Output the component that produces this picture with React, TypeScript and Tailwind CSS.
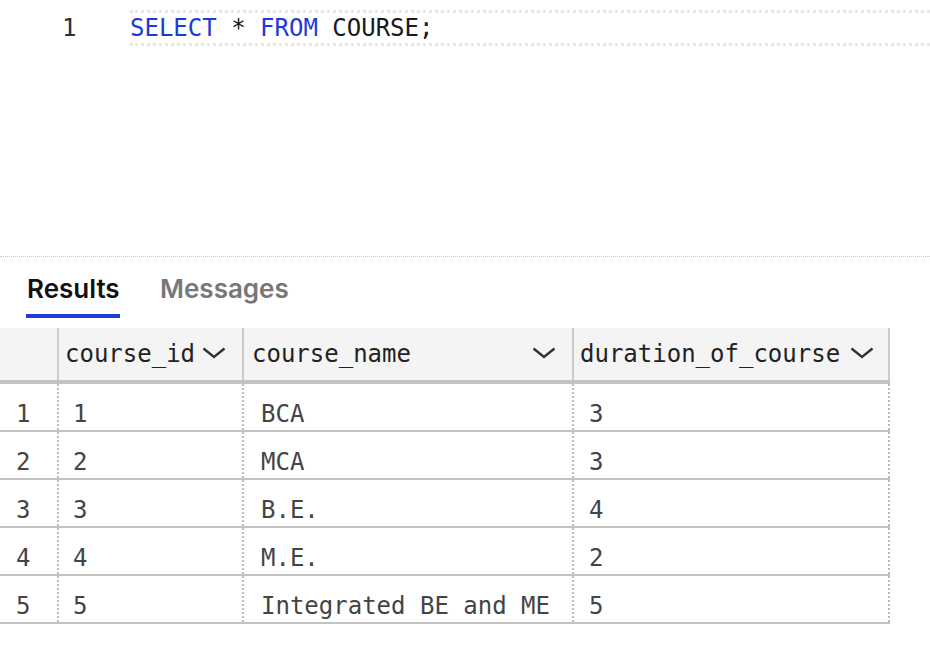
import React from "react";

const mono = { fontFamily: '"DejaVu Sans Mono", "Liberation Mono", monospace' };

function Chevron() {
  return (
    <svg width="24" height="12" viewBox="0 0 24 12" className="shrink-0 -mt-[2px]">
      <polyline points="1.5,1.5 12,10 22.5,1.5" fill="none" stroke="#333" strokeWidth="2.4" />
    </svg>
  );
}

const rows = [
  ["1", "1", "BCA", "3"],
  ["2", "2", "MCA", "3"],
  ["3", "3", "B.E.", "4"],
  ["4", "4", "M.E.", "2"],
  ["5", "5", "Integrated BE and ME", "5"],
];

export default function App() {
  return (
    <div className="w-[930px] h-[650px] bg-white overflow-hidden" style={mono}>
      {/* Editor */}
      <div className="h-[256px] pt-[10px]">
        <div className="flex">
          <div className="w-[130px] pl-[62px] pt-[3px] text-[24px] leading-[30px] text-[#2e2e3a]">1</div>
          <div className="flex-1 h-[36px] border-y-[3px] border-dotted border-[#e8e8e8] text-[24px] leading-[30px] text-[#1a1a1a] whitespace-pre">
            <span className="text-[#1d3bd6]">SELECT</span> * <span className="text-[#1d3bd6]">FROM</span> COURSE;
          </div>
        </div>
      </div>

      {/* Separator */}
      <div className="border-t border-dotted border-[#c8c8c8]" />

      {/* Tabs */}
      <div
        className="flex items-start pl-[26px] pt-[16px] h-[71px]"
        style={{ fontFamily: 'Inter, "Noto Sans", sans-serif' }}
      >
        <div className="flex flex-col w-[94px]">
          <span className="text-[26px] leading-[32px] font-semibold text-[#111] pl-[1px]">Results</span>
          <div className="mt-[9px] h-[4px] bg-[#1c3ed6]" />
        </div>
        <span className="ml-[40px] text-[26px] leading-[32px] font-semibold text-[#777]">Messages</span>
      </div>

      {/* Table */}
      <div className="w-[890px]">
        <div className="flex h-[56px] bg-[#f4f4f4] border-b-[4px] border-[#c2c2c2] text-[24px] leading-[28px] text-[#222]">
          <div className="w-[59px] border-r-2 border-[#cbcbcb]" />
          <div className="w-[185px] border-r-2 border-[#cbcbcb] flex items-center justify-between pl-[6px] pr-[16px]">
            <span>course_id</span>
            <Chevron />
          </div>
          <div className="w-[330px] border-r-2 border-[#cbcbcb] flex items-center justify-between pl-[8px] pr-[16px]">
            <span>course_name</span>
            <Chevron />
          </div>
          <div className="w-[316px] border-r-2 border-[#cbcbcb] flex items-center justify-between pl-[6px] pr-[14px]">
            <span>duration_of_course</span>
            <Chevron />
          </div>
        </div>
        {rows.map((r) => (
          <div
            key={r[0]}
            className="flex h-[48px] border-b-2 border-[#c2c2c2] text-[24px] leading-[28px] text-[#444]"
          >
            <div className="w-[59px] border-r-2 border-dotted border-[#bdbdbd] pl-[16px] pt-[16px]">{r[0]}</div>
            <div className="w-[185px] border-r-2 border-dotted border-[#bdbdbd] pl-[14px] pt-[16px]">{r[1]}</div>
            <div className="w-[330px] border-r-2 border-dotted border-[#bdbdbd] pl-[17px] pt-[16px] whitespace-pre">{r[2]}</div>
            <div className="w-[316px] border-r-2 border-dotted border-[#bdbdbd] pl-[15px] pt-[16px]">{r[3]}</div>
          </div>
        ))}
      </div>
    </div>
  );
}
